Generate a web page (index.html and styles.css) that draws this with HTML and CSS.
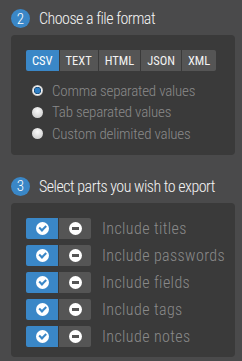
FILE: index.html
```html
<!DOCTYPE html>
<html lang="en">
<head>
    <meta charset="UTF-8">
    <meta name="viewport" content="width=device-width, initial-scale=1.0">
    <title>Export</title>
    <link rel="stylesheet" href="styles.css">
</head>
<body>
    <div class="section">
        <h2 class="section-title"><span class="step">2</span> Choose a file format</h2>
        <div class="panel">
            <div class="segments">
                <button class="segment active">CSV</button>
                <button class="segment">TEXT</button>
                <button class="segment">HTML</button>
                <button class="segment">JSON</button>
                <button class="segment">XML</button>
            </div>
            <ul class="radios">
                <li><span class="radio checked"></span> Comma separated values</li>
                <li><span class="radio"></span> Tab separated values</li>
                <li><span class="radio"></span> Custom delimited values</li>
            </ul>
        </div>
    </div>

    <div class="section">
        <h2 class="section-title"><span class="step">3</span> Select parts you wish to export</h2>
        <div class="panel">
            <ul class="parts">
                <li>
                    <span class="toggle">
                        <span class="toggle-btn on"><span class="ico-check"></span></span>
                        <span class="toggle-btn off"><span class="ico-minus"></span></span>
                    </span>
                    Include titles
                </li>
                <li>
                    <span class="toggle">
                        <span class="toggle-btn on"><span class="ico-check"></span></span>
                        <span class="toggle-btn off"><span class="ico-minus"></span></span>
                    </span>
                    Include passwords
                </li>
                <li>
                    <span class="toggle">
                        <span class="toggle-btn on"><span class="ico-check"></span></span>
                        <span class="toggle-btn off"><span class="ico-minus"></span></span>
                    </span>
                    Include fields
                </li>
                <li>
                    <span class="toggle">
                        <span class="toggle-btn on"><span class="ico-check"></span></span>
                        <span class="toggle-btn off"><span class="ico-minus"></span></span>
                    </span>
                    Include tags
                </li>
                <li>
                    <span class="toggle">
                        <span class="toggle-btn on"><span class="ico-check"></span></span>
                        <span class="toggle-btn off"><span class="ico-minus"></span></span>
                    </span>
                    Include notes
                </li>
            </ul>
        </div>
    </div>
</body>
</html>
```

FILE: styles.css
```css
/* Page */
body {
    margin: 0;
    padding: 9px 7px 0 11px;
    background-color: #4a4a4b;
    font-family: 'Roboto Condensed', 'Noto Sans', sans-serif;
    font-stretch: 62.5%;
    font-weight: 300;
    color: #8a8a8a;
    overflow: hidden;
    white-space: nowrap;
}

ul {
    list-style: none;
    margin: 0;
    padding: 0;
}

/* Section headings */
.section + .section {
    margin-top: 22px;
}

.section-title {
    display: flex;
    align-items: center;
    gap: 9px;
    height: 19px;
    margin: 0;
    font-size: 16px;
    font-weight: 300;
    letter-spacing: -0.5px;
    color: #f4f4f4;
}

.step {
    display: flex;
    justify-content: center;
    align-items: center;
    width: 19px;
    height: 19px;
    border-radius: 50%;
    background-color: #3a87c7;
    color: #fff;
    font-size: 15px;
    letter-spacing: 0;
}

/* Panels */
.panel {
    margin-top: 7px;
    width: 224px;
    box-sizing: border-box;
    padding: 15px 15px 10px;
    background-color: #3a3a3a;
    border-radius: 4px;
}

/* Format switcher */
.segments {
    display: flex;
    gap: 1px;
}

.segment {
    height: 21px;
    padding: 0 6px;
    border: none;
    background-color: #555;
    color: #f2f2f2;
    font-family: inherit;
    font-stretch: inherit;
    font-weight: 400;
    font-size: 12.5px;
}

.segment:first-child {
    border-radius: 2px 0 0 2px;
}

.segment:last-child {
    border-radius: 0 2px 2px 0;
}

.segment.active {
    background-color: #3a87c7;
    color: #fff;
}

.radios {
    margin-top: 9px;
    font-size: 15px;
    letter-spacing: -0.2px;
}

.radios li {
    display: flex;
    align-items: center;
    gap: 9px;
    height: 21.5px;
    padding-left: 6px;
}

.radio {
    width: 11px;
    height: 11px;
    border-radius: 50%;
    background: radial-gradient(circle at 50% 35%, #fafafa, #c4c4c4);
}

.radio.checked {
    background: radial-gradient(circle, #2f7fc4 0 2.6px, #15426b 3.3px, #f2f2f2 4px, #bdbdbd 5.5px);
}

/* Parts toggles */
.parts li {
    display: flex;
    align-items: center;
    gap: 11px;
    height: 21px;
    font-size: 16px;
    letter-spacing: 0.4px;
}

.parts li + li {
    margin-top: 6px;
}

.toggle {
    display: flex;
    gap: 1px;
}

.toggle-btn {
    display: flex;
    justify-content: center;
    align-items: center;
    width: 32px;
    height: 21px;
}

.toggle-btn.on {
    background-color: #3a87c7;
    border-radius: 2px 0 0 2px;
}

.toggle-btn.off {
    background-color: #555;
    border-radius: 0 2px 2px 0;
}

.ico-check,
.ico-minus {
    position: relative;
    width: 13px;
    height: 13px;
    border-radius: 50%;
    background-color: #fff;
}

.ico-check::after {
    content: "";
    position: absolute;
    left: 3.5px;
    top: 3px;
    width: 5px;
    height: 2.5px;
    border-left: 2px solid #3a87c7;
    border-bottom: 2px solid #3a87c7;
    transform: rotate(-45deg);
}

.ico-minus::after {
    content: "";
    position: absolute;
    left: 3px;
    top: 5px;
    width: 7px;
    height: 3px;
    background-color: #555;
}
```
